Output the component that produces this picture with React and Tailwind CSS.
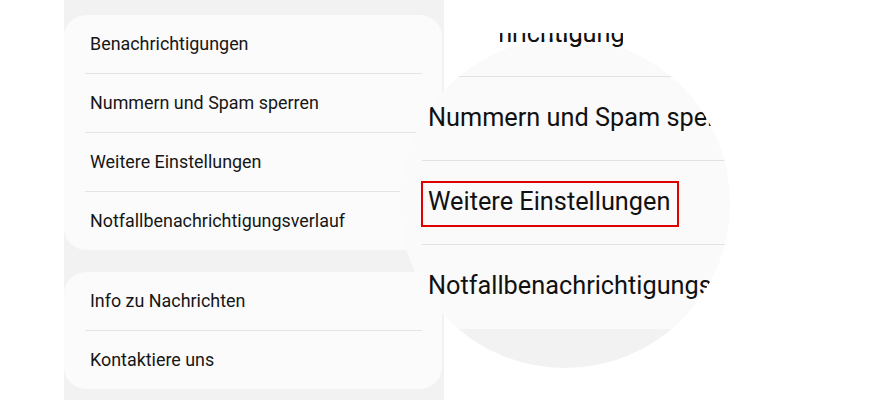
// Einstellungen-Liste mit Lupe über "Weitere Einstellungen"
const GROUPS = [
  ['Benachrichtigungen', 'Nummern und Spam sperren', 'Weitere Einstellungen', 'Notfallbenachrichtigungsverlauf'],
  ['Info zu Nachrichten', 'Kontaktiere uns'],
]

const ZOOM_ROWS = ['Benachrichtigungen', 'Nummern und Spam sperren', 'Weitere Einstellungen', 'Notfallbenachrichtigungsverlauf']

function Card({ items }) {
  return (
    <div className="w-[378px] rounded-[22px] bg-[#fbfbfb]">
      {items.map((label, i) => (
        <div key={label}>
          {i > 0 && <div className="ml-[21px] mr-[20px] h-px bg-[#e4e4e4]" />}
          <div className="h-[58px] flex items-center pl-[26px] pt-[1px] text-[17.9px] text-[#161616]">{label}</div>
        </div>
      ))}
    </div>
  )
}

function Magnifier() {
  return (
    <>
      {/* Lupe */}
      <div className="absolute left-[400px] top-[38px] w-[330px] h-[330px] rounded-full overflow-hidden bg-[#fafafa]">
        <div className="absolute left-0 top-[-45px] w-[330px]">
          <div className="bg-[#fafafa] pb-[1px]">
            {ZOOM_ROWS.map((label, i) => (
              <div key={label}>
                {i > 0 && <div className="ml-[22px] w-[303px] h-[1.5px] bg-[#e2e2e2]" />}
                <div className="h-[82.5px] flex items-center ml-[28px] w-[285px] overflow-hidden whitespace-nowrap text-[25.3px] text-[#111]">
                  {label}
                </div>
              </div>
            ))}
          </div>
          <div className="h-[80px] bg-[#f2f2f2]" />
        </div>
      </div>

      {/* abgeschnittenes Stück oben */}
      <div className="absolute left-[500px] top-[33px] w-[123px] h-[20px] overflow-hidden">
        <div className="absolute left-[-72px] top-[-40px] h-[82.5px] flex items-center whitespace-nowrap text-[25.3px] text-[#111]">
          Benachrichtigungen
        </div>
      </div>

      {/* Markierung */}
      <div className="absolute left-[421px] top-[181px] w-[258px] h-[46px] border-2 border-[#e00000]" />
    </>
  )
}

export default function App() {
  return (
    <div className="relative w-[879px] h-[400px] bg-white overflow-hidden font-['Roboto',sans-serif]">
      <div className="ml-[64px] w-[380px] h-full bg-[#f2f2f2] pt-[15px] flex flex-col gap-[22px]">
        {GROUPS.map((g, i) => (
          <Card key={i} items={g} />
        ))}
      </div>
      <Magnifier />
    </div>
  )
}
